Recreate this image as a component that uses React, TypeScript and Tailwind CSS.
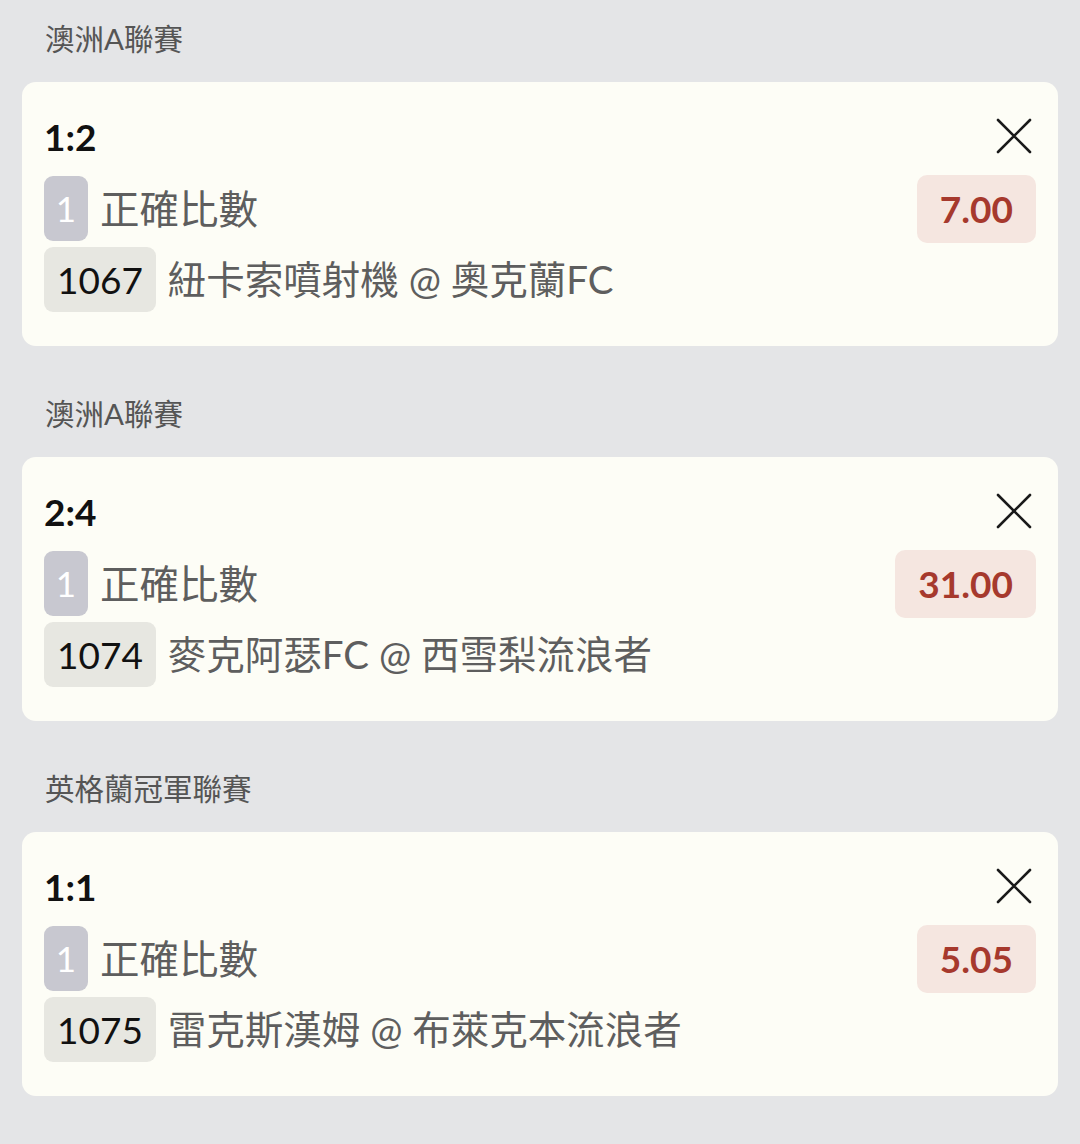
type Bet = {
  league: string
  score: string
  odds: string
  code: string
  match: string
}

const bets: Bet[] = [
  { league: '澳洲A聯賽', score: '1:2', odds: '7.00', code: '1067', match: '紐卡索噴射機 @ 奧克蘭FC' },
  { league: '澳洲A聯賽', score: '2:4', odds: '31.00', code: '1074', match: '麥克阿瑟FC @ 西雪梨流浪者' },
  { league: '英格蘭冠軍聯賽', score: '1:1', odds: '5.05', code: '1075', match: '雷克斯漢姆 @ 布萊克本流浪者' },
]

const font = "font-['Lato','Noto_Sans_CJK_TC',sans-serif]"

function CloseIcon() {
  return (
    <svg width="36" height="36" viewBox="0 0 36 36" fill="none">
      <path d="M2 2L34 34M34 2L2 34" stroke="#1a1a1a" strokeWidth="2.6" strokeLinecap="round" />
    </svg>
  )
}

function BetCard({ bet }: { bet: Bet }) {
  return (
    <div className="rounded-[14px] bg-[#fdfdf6] pl-[22px] pr-[22px] pt-[24px] pb-[34px]">
      <div className="flex h-[60px] items-center justify-between">
        <span className="text-[37px] font-bold leading-none text-[#111]">{bet.score}</span>
        <span className="mr-[4px]"><CloseIcon /></span>
      </div>
      <div className="mt-[8px] flex h-[69px] items-center justify-between">
        <div className="flex items-center">
          <span className="flex h-[65px] w-[44px] items-center justify-center rounded-[9px] bg-[#c8c8d0] text-[35px] leading-none text-white">1</span>
          <span className="ml-[12px] text-[39.5px] leading-none text-[#5e5e5e]">正確比數</span>
        </div>
        <span className="flex h-[68px] items-center rounded-[10px] bg-[#f5e6e0] px-[23px] text-[37px] font-bold leading-none text-[#a6392d]">{bet.odds}</span>
      </div>
      <div className="mt-[4px] flex h-[65px] items-center">
        <span className="flex h-[65px] items-center rounded-[9px] bg-[#e7e7e1] px-[13px] text-[37px] leading-none text-[#111]">{bet.code}</span>
        <span className="ml-[12px] text-[38.5px] leading-none text-[#5e5e5e]">{bet.match}</span>
      </div>
    </div>
  )
}

export default function App() {
  return (
    <div className={`min-h-[1144px] bg-[#e4e5e7] px-[22px] ${font}`}>
      {bets.map((bet, i) => (
        <div key={i} className={i > 0 ? 'mt-[29px]' : ''}>
          <div className="flex h-[82px] items-center pl-[23px] pb-[4px] text-[29.5px] text-[#555]">{bet.league}</div>
          <BetCard bet={bet} />
        </div>
      ))}
    </div>
  )
}
